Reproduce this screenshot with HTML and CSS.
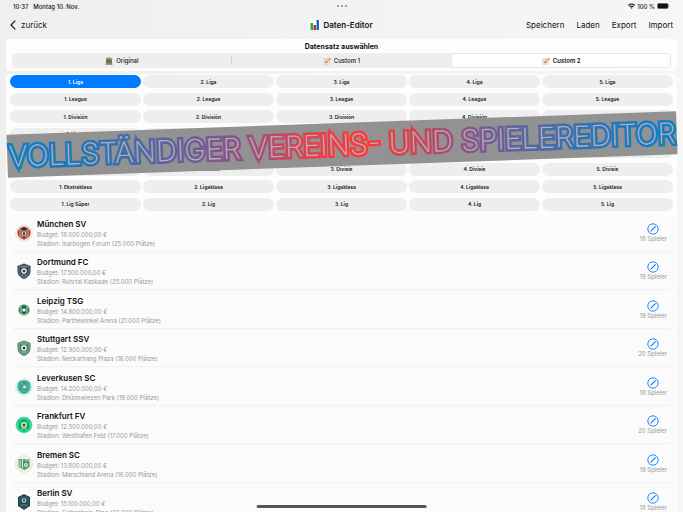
FILE: index.html
```
<!DOCTYPE html>
<html lang="de">
<head>
    <meta charset="UTF-8">
    <meta name="viewport" content="width=device-width, initial-scale=1.0">
    <title>Daten-Editor</title>
    <link rel="stylesheet" href="styles.css">
</head>
<body>
    <svg class="defs" width="0" height="0" aria-hidden="true">
        <symbol id="note" viewBox="0 0 16 16">
            <path d="M2 3h11v12H1z" fill="#e9e7df" stroke="#b9b7ad" stroke-width=".6"/>
            <path d="M3 6h8M3 8.500h7M3 11h4" stroke="#a9adb0" stroke-width=".8"/>
            <path d="M5 12l1-3 7-7 2.500 2.500-7 7z" fill="#f2b632"/>
            <path d="M12 3l1.500-1.500 2.500 2.500-1.500 1.500z" fill="#e5737b"/>
            <path d="M5 12l1-3 2.500 2.500z" fill="#5b4a3a"/>
        </symbol>
        <symbol id="pencil" viewBox="0 0 12 12">
            <circle cx="6" cy="6" r="5.200" fill="none" stroke="#0a7aff" stroke-width=".9"/>
            <path d="M3.200 8.800l.5-1.300 4.500-4.500.8.800-4.500 4.500z" fill="#0a7aff"/>
        </symbol>
        <symbol id="shield" viewBox="0 0 18 18">
            <path d="M9 1.500L15.500 4v5c0 4-3 6.500-6.500 8C5.500 15.500 2.500 13 2.500 9V4z" fill="currentColor"/>
            <path d="M9 3l5 2v4c0 3.200-2.200 5.200-5 6.500C6.200 14.200 4 12.200 4 9V5z" fill="none" stroke="#c9b77b" stroke-width=".6"/>
            <circle cx="9" cy="9" r="2.800" fill="#f4f4ee"/>
            <path d="M9 7.500l1.400 1-.5 1.700H8.100l-.5-1.700z" fill="#17303c"/>
            <path d="M6 5h6M6.500 13h5" stroke="#e9e3c4" stroke-width=".6"/>
        </symbol>
    </svg>

    <div class="status-bar">
        <span>10:37 &nbsp; Montag 10. Nov.</span>
        <span class="dots"><i></i><i></i><i></i></span>
        <span class="status-right">
            <svg width="7" height="6" viewBox="0 0 14 12"><path d="M0 4a10 10 0 0 1 14 0l-1.700 1.800a7.500 7.500 0 0 0-10.600 0zM2.700 7a6 6 0 0 1 8.600 0L9.800 8.500a4 4 0 0 0-5.600 0zM5 9.300a3 3 0 0 1 4 0l-2 2.200z" fill="#111"/></svg>
            100 %
            <svg width="13" height="6" viewBox="0 0 13 6"><rect x=".3" y=".3" width="11" height="5.400" rx="1.600" fill="#111" stroke="#999" stroke-width=".5"/><path d="M12 2v2q1-1 0-2" fill="#999"/></svg>
        </span>
    </div>

    <header class="nav">
        <button type="button" class="nav-button back">
            <svg width="6" height="10" viewBox="0 0 6 10"><path d="M5.300.7L1 5l4.300 4.300" fill="none" stroke="#111" stroke-width="1.100"/></svg>
            zurück
        </button>
        <h1>
            <svg width="10" height="10" viewBox="0 0 10 10"><path d="M0 0h10v10H0z" fill="#fff"/><path d="M.5 3h2.500v7H.5z" fill="#1eb53a"/><path d="M3.500 5H6v5H3.500z" fill="#d5242c"/><path d="M6.500 0H9v10H6.500z" fill="#2166c9"/></svg>
            Daten-Editor
        </h1>
        <div class="actions">
            <button type="button" class="nav-button">Speichern</button>
            <button type="button" class="nav-button">Laden</button>
            <button type="button" class="nav-button">Export</button>
            <button type="button" class="nav-button">Import</button>
        </div>
    </header>

    <section class="dataset">
        <h2>Datensatz auswählen</h2>
        <div class="segments">
            <button type="button" class="segment">
                <svg width="8" height="8" viewBox="0 0 16 16"><path d="M1 3l7-3 7 3v2H1zM1 13h14v3H1z" fill="#a99c7b"/><path d="M2 5h12v8H2z" fill="#3d382d"/><path d="M3 5h2v8H3zM7 7h2v6H7zM11 5h2v8h-2z" fill="#b8ab88"/></svg>
                Original
            </button>
            <button type="button" class="segment"><svg width="8" height="8"><use href="#note"/></svg>Custom 1</button>
            <button type="button" class="segment selected"><svg width="8" height="8"><use href="#note"/></svg>Custom 2</button>
        </div>
    </section>

    <main class="editor">
        <div class="leagues">
            <button type="button" class="league active">1. Liga</button>
            <button type="button" class="league">2. Liga</button>
            <button type="button" class="league">3. Liga</button>
            <button type="button" class="league">4. Liga</button>
            <button type="button" class="league">5. Liga</button>
            <button type="button" class="league">1. League</button>
            <button type="button" class="league">2. League</button>
            <button type="button" class="league">3. League</button>
            <button type="button" class="league">4. League</button>
            <button type="button" class="league">5. League</button>
            <button type="button" class="league">1. División</button>
            <button type="button" class="league">2. División</button>
            <button type="button" class="league">3. División</button>
            <button type="button" class="league">4. División</button>
            <button type="button" class="league">5. División</button>
            <button type="button" class="league">1. Ligue</button>
            <button type="button" class="league">2. Ligue</button>
            <button type="button" class="league">3. Ligue</button>
            <button type="button" class="league">4. Ligue</button>
            <button type="button" class="league">5. Ligue</button>
            <button type="button" class="league">1. Serie</button>
            <button type="button" class="league">2. Serie</button>
            <button type="button" class="league">3. Serie</button>
            <button type="button" class="league">4. Serie</button>
            <button type="button" class="league">5. Serie</button>
            <button type="button" class="league">1. Divisie</button>
            <button type="button" class="league">2. Divisie</button>
            <button type="button" class="league">3. Divisie</button>
            <button type="button" class="league">4. Divisie</button>
            <button type="button" class="league">5. Divisie</button>
            <button type="button" class="league">1. Ekstraklasa</button>
            <button type="button" class="league">2. Ligaklasa</button>
            <button type="button" class="league">3. Ligaklasa</button>
            <button type="button" class="league">4. Ligaklasa</button>
            <button type="button" class="league">5. Ligaklasa</button>
            <button type="button" class="league">1. Lig Süper</button>
            <button type="button" class="league">2. Lig</button>
            <button type="button" class="league">3. Lig</button>
            <button type="button" class="league">4. Lig</button>
            <button type="button" class="league">5. Lig</button>
        </div>

        <div class="clubs">
            <article class="club">
                <svg class="crest" viewBox="0 0 18 18"><circle cx="9" cy="9" r="8.500" fill="#f6f0e2" stroke="#ddd8cb" stroke-width=".5"/><circle cx="9" cy="9" r="6.500" fill="#a82f2b"/><path d="M5 4v10M7 3v12M11 3v12M13 4v10" stroke="#ecdcc4" stroke-width=".8"/><circle cx="9" cy="9.500" r="2.700" fill="#fff" stroke="#322" stroke-width=".7"/><path d="M9 8l1.500 1-.6 1.700H8.100L7.500 9zM6.500 4h5v2h-5z" fill="#332528"/></svg>
                <div class="info"><h3>München SV</h3><p>Budget: 18.000.000,00 €</p><p>Stadion: Isarbogen Forum (25.000 Plätze)</p></div>
                <button type="button" class="players"><svg width="12" height="12"><use href="#pencil"/></svg>18 Spieler</button>
            </article>
            <article class="club">
                <svg class="crest navy"><use href="#shield"/></svg>
                <div class="info"><h3>Dortmund FC</h3><p>Budget: 17.500.000,00 €</p><p>Stadion: Ruhrtal Kaskade (25.000 Plätze)</p></div>
                <button type="button" class="players"><svg width="12" height="12"><use href="#pencil"/></svg>19 Spieler</button>
            </article>
            <article class="club">
                <svg class="crest" viewBox="0 0 18 18"><circle cx="9" cy="9" r="5.500" fill="#25815b"/><path d="M6 5v8M12 5v8" stroke="#b9d8b8" stroke-width="1"/><path d="M7 6h4v6H7z" fill="#164d3c"/><circle cx="9" cy="9" r="1.800" fill="#f2f4e9"/><path d="M6 13q3 2 6 0" fill="none" stroke="#e4d9a6" stroke-width=".8"/></svg>
                <div class="info"><h3>Leipzig TSG</h3><p>Budget: 14.800.000,00 €</p><p>Stadion: Parthewinkel Arena (21.000 Plätze)</p></div>
                <button type="button" class="players"><svg width="12" height="12"><use href="#pencil"/></svg>19 Spieler</button>
            </article>
            <article class="club">
                <svg class="crest green"><use href="#shield"/></svg>
                <div class="info"><h3>Stuttgart SSV</h3><p>Budget: 12.900.000,00 €</p><p>Stadion: Neckarhang Plaza (16.000 Plätze)</p></div>
                <button type="button" class="players"><svg width="12" height="12"><use href="#pencil"/></svg>20 Spieler</button>
            </article>
            <article class="club">
                <svg class="crest" viewBox="0 0 18 18"><circle cx="9" cy="9" r="8.500" fill="#eef5f2" stroke="#d8dedb" stroke-width=".5"/><circle cx="9" cy="9" r="7.300" fill="#69dcc5"/><path d="M9 3l5 1.500v5c0 3-2 4.500-5 5.500-3-1-5-2.500-5-5.500v-5z" fill="#50b4a1" stroke="#267e72" stroke-width=".7"/><circle cx="9.500" cy="9" r="2" fill="#c3efe2" stroke="#267e72" stroke-width=".6"/><path d="M6 6v6M8 5l4 1M8 12l4-1" stroke="#267e72" stroke-width=".7"/></svg>
                <div class="info"><h3>Leverkusen SC</h3><p>Budget: 14.200.000,00 €</p><p>Stadion: Dhünnwiesen Park (19.000 Plätze)</p></div>
                <button type="button" class="players"><svg width="12" height="12"><use href="#pencil"/></svg>18 Spieler</button>
            </article>
            <article class="club">
                <svg class="crest" viewBox="0 0 18 18"><circle cx="9" cy="9" r="8.300" fill="#26d693" stroke="#c9eddd" stroke-width=".5"/><path d="M4 5l5-2 5 2v5c0 3-2 4-5 5.500C6 14 4 13 4 10z" fill="#0da276"/><circle cx="9" cy="9" r="3" fill="#e4eda7"/><path d="M9 7.300l1.700 1.200-.7 2H8l-.7-2z" fill="#08735c"/><path d="M4.500 6.500l2-1.500M13.500 6.500l-2-1.500M6 13h6" stroke="#d5e66c" stroke-width=".8"/></svg>
                <div class="info"><h3>Frankfurt FV</h3><p>Budget: 12.500.000,00 €</p><p>Stadion: Westhafen Feld (17.000 Plätze)</p></div>
                <button type="button" class="players"><svg width="12" height="12"><use href="#pencil"/></svg>20 Spieler</button>
            </article>
            <article class="club">
                <svg class="crest" viewBox="0 0 18 18"><circle cx="9" cy="9" r="8.500" fill="#f4f0d6" stroke="#dad8c8" stroke-width=".5"/><path d="M3.500 4h11v8l-5 3-6-3z" fill="#4ba083"/><path d="M5 5v7M7.500 4v9M10 5h4" stroke="#e6edcf" stroke-width=".9"/><circle cx="11" cy="10" r="2.500" fill="#edf0dc" stroke="#2d7762" stroke-width=".8"/><circle cx="11" cy="10" r=".8" fill="#2d7762"/></svg>
                <div class="info"><h3>Bremen SC</h3><p>Budget: 13.800.000,00 €</p><p>Stadion: Marschland Arena (16.000 Plätze)</p></div>
                <button type="button" class="players"><svg width="12" height="12"><use href="#pencil"/></svg>19 Spieler</button>
            </article>
            <article class="club">
                <svg class="crest" viewBox="0 0 18 18"><path d="M9 1l6 3v9l-6 4-6-4V4z" fill="#1d4850"/><path d="M9 3l4 2v7l-4 3-4-3V5z" fill="none" stroke="#477780" stroke-width=".6"/><circle cx="9" cy="7.500" r="2.300" fill="#d2dfdc"/><path d="M9 6l1.300 1-.5 1.500H8.200L7.700 7z" fill="#1d4850"/><path d="M6 12h6" stroke="#8cabaa" stroke-width=".7"/></svg>
                <div class="info"><h3>Berlin SV</h3><p>Budget: 15.100.000,00 €</p><p>Stadion: Eichenhain-Ring (20.000 Plätze)</p></div>
                <button type="button" class="players"><svg width="12" height="12"><use href="#pencil"/></svg>18 Spieler</button>
            </article>
        </div>
    </main>

    <div class="banner">
        <svg viewBox="0 0 670 43">
            <linearGradient id="ink" gradientUnits="userSpaceOnUse" x1="0" y1="0" x2="670" y2="0">
                <stop offset="0" stop-color="#0880c8"/>
                <stop offset=".12" stop-color="#2475b8"/>
                <stop offset=".34" stop-color="#8c5288"/>
                <stop offset=".45" stop-color="#e63f4c"/>
                <stop offset=".53" stop-color="#ff3a36"/>
                <stop offset=".6" stop-color="#d8424f"/>
                <stop offset=".7" stop-color="#80588f"/>
                <stop offset=".86" stop-color="#2d73b6"/>
                <stop offset="1" stop-color="#0880c8"/>
            </linearGradient>
            <text class="banner-text" x="335" y="32" text-anchor="middle" stroke="url(#ink)">VOLLSTÄNDIGER VEREINS- UND SPIELEREDITOR</text>
        </svg>
    </div>
    <div class="home-indicator"></div>
</body>
</html>
```

FILE: styles.css
```
* {
    box-sizing: border-box;
}
body {
    margin: 0;
    height: 100vh;
    overflow: hidden;
    position: relative;
    background: linear-gradient(90deg, #efefef, #f6f6f6);
    color: #111;
    font-family: Inter, "Liberation Sans", sans-serif;
}
h1, h2, h3, p {
    margin: 0;
}
button {
    font: inherit;
    color: inherit;
    border: none;
    padding: 0;
    background: none;
    cursor: pointer;
}
svg {
    flex: none;
}
.defs {
    position: absolute;
}
.status-bar {
    display: grid;
    grid-template-columns: 1fr auto 1fr;
    align-items: center;
    height: 12px;
    padding: 0 13px;
    font-size: 6px;
    font-weight: 500;
}
.dots {
    display: flex;
    gap: 2px;
}
.dots i {
    width: 2px;
    height: 2px;
    border-radius: 50%;
    background: #888;
}
.status-right {
    display: flex;
    justify-content: flex-end;
    align-items: center;
    gap: 2px;
}
.nav {
    display: grid;
    grid-template-columns: 1fr auto 1fr;
    align-items: center;
    height: 25px;
    padding: 0 10px;
    font-size: 8px;
}
.nav h1 {
    display: flex;
    align-items: center;
    gap: 3px;
    font-size: 8px;
    font-weight: 600;
}
.back {
    display: flex;
    align-items: center;
    gap: 5px;
}
.actions {
    display: flex;
    justify-content: flex-end;
    gap: 12px;
}
.dataset {
    margin: 2px 6px 3px;
    padding: 2px 6px 3px;
    border-radius: 4px;
    background: #fdfdfd;
}
.dataset h2 {
    font-size: 7px;
    line-height: 12px;
    font-weight: 700;
    text-align: center;
}
.segments {
    display: grid;
    grid-template-columns: repeat(3, 1fr);
    border-radius: 4px;
    background: #eee;
}
.segment {
    display: flex;
    align-items: center;
    justify-content: center;
    gap: 3px;
    height: 15px;
    font-size: 6px;
    font-weight: 500;
}
.segment:first-child {
    background: linear-gradient(#d5d5d5, #d5d5d5) right center / 1px 9px no-repeat;
}
.segment.selected {
    border: 1px solid #e6e6e6;
    border-radius: 4px;
    background: #fff;
    font-weight: 600;
}
.editor {
    margin: 0 6px;
    padding: 1px 4px 0;
    border-radius: 4px 4px 0 0;
    background: #fdfdfd;
}
.leagues {
    display: grid;
    grid-template-columns: repeat(5, 1fr);
    align-content: space-between;
    column-gap: 2px;
    height: 136px;
}
.league {
    height: 13px;
    border-radius: 7px;
    background: #eee;
    font-size: 5px;
    font-weight: 600;
}
.league.active {
    background: #007aff;
    color: #fff;
}
.clubs {
    display: flex;
    flex-direction: column;
    justify-content: space-between;
    height: 305px;
    margin-top: 4px;
}
.club {
    display: flex;
    align-items: center;
    height: 36px;
    padding: 0 6px 0 5px;
    border-radius: 4px;
    background: #fbfbfb;
    box-shadow: 0 1px 2px #efefef;
}
.crest {
    width: 18px;
    height: 18px;
}
.navy {
    color: #233f55;
}
.green {
    color: #3c8870;
}
.info {
    flex: 1;
    margin-left: 4px;
    color: #999;
    font-size: 6px;
    line-height: 9px;
}
.info h3 {
    color: #111;
    font-size: 8px;
    line-height: 12px;
    font-weight: 600;
}
.players {
    display: flex;
    flex-direction: column;
    align-items: center;
    color: #999;
    font-size: 6px;
    line-height: 8px;
}
.banner {
    position: absolute;
    top: 123px;
    left: 7px;
    right: 6px;
    background: #929292;
    transform: rotate(-2deg);
}
.banner svg {
    display: block;
    width: 100%;
}
.banner-text {
    font-family: Inter, sans-serif;
    font-size: 29px;
    font-weight: 200;
    fill: #b5aeb8;
    stroke-width: 5px;
    paint-order: stroke;
}
.home-indicator {
    position: absolute;
    bottom: 4px;
    left: 50%;
    width: 25%;
    height: 3px;
    border-radius: 2px;
    background: #555;
    transform: translateX(-50%);
}
```
